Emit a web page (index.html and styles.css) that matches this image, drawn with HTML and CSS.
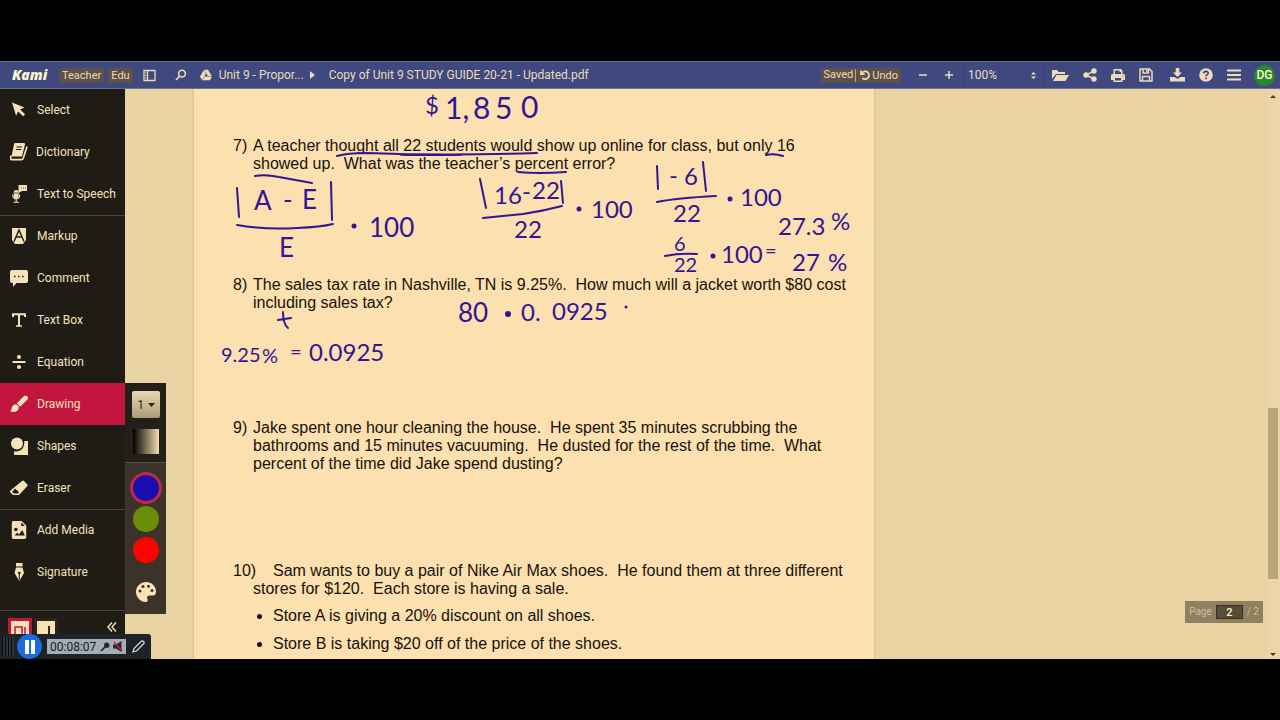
FILE: index.html
```html
<!DOCTYPE html>
<html lang="en">
<head>
<meta charset="utf-8">
<meta name="viewport" content="width=device-width, initial-scale=1">
<title>Kami - Copy of Unit 9 STUDY GUIDE 20-21 - Updated.pdf</title>
<link rel="stylesheet" href="styles.css">
</head>
<body>
<div class="app">
  <header class="topbar">
    <a class="logo" href="#">Kami</a>
    <span class="tag">Teacher</span>
    <span class="tag tag-edu">Edu</span>
    <button class="icon-btn panel-btn" aria-label="Toggle sidebar"><svg width="13" height="13" viewBox="0 0 13 13" fill="none" stroke="currentColor"><path d="M1 1.5h11v10H1zM4.5 1.5v10" stroke-width="1.3"/><path d="M2 4h1.5M2 6.5h1.5M2 9h1.5"/></svg></button>
    <button class="icon-btn search-btn" aria-label="Search"><svg width="12" height="12" viewBox="0 0 12 12" fill="none" stroke="currentColor" stroke-width="1.6"><circle cx="7" cy="4.6" r="3.4"/><path d="M4.6 7.1L1 11"/></svg></button>
    <svg class="drive" width="12" height="12" viewBox="0 0 12 12" fill="currentColor"><path d="M4 .8h4L12 7.4 10 11.2H2L0 7.4z"/><path d="M6 4.500l-1.700 3h3.400z" fill="#3f487f"/><path d="M4 1l4 6.500h4M4.300 7.500L2 11" fill="none" stroke="#3f487f" stroke-width=".5"/></svg>
    <a class="crumb" href="#">Unit 9 - Propor...</a>
    <svg class="crumb-arrow" width="5" height="8" viewBox="0 0 5 8" fill="currentColor"><path d="M0 0l5 4-5 4z"/></svg>
    <span class="title">Copy of Unit 9 STUDY GUIDE 20-21 - Updated.pdf</span>
    <div class="status"><span>Saved</span><button class="undo"><svg width="10" height="10" viewBox="0 0 10 10" fill="none" stroke="currentColor" stroke-width="1.700"><path d="M1 .5v3.700h3.700M1.500 3.700C3 1 6 .8 7.700 2.300c1.800 1.700 1.700 4.500-.2 5.900C5.800 9.400 3.600 9.200 2.200 8"/></svg>Undo</button></div>
    <button class="icon-btn zoom-btn" aria-label="Zoom out"><svg width="10" height="10" viewBox="0 0 10 10" stroke="currentColor" stroke-width="1.500"><path d="M1 5h8"/></svg></button>
    <button class="icon-btn zoom-btn" aria-label="Zoom in"><svg width="10" height="10" viewBox="0 0 10 10" stroke="currentColor" stroke-width="1.500"><path d="M1 5h8M5 1v8"/></svg></button>
    <div class="zoom-field">
      <select class="zoom-select" aria-label="Zoom level"><option>100%</option></select>
      <svg class="zoom-arrows" width="5" height="7" viewBox="0 0 5 7" fill="currentColor"><path d="M0 2.500L2.500 0 5 2.500zM0 4.500h5L2.500 7z"/></svg>
    </div>
    <nav class="actions">
      <button class="icon-btn" aria-label="Open"><svg width="17" height="13" viewBox="0 0 17 13" fill="currentColor"><path d="M0 10V1h5l1.500 2H13v2H4z"/><path d="M4.500 6H17l-3.500 6H1z"/></svg></button>
      <button class="icon-btn" aria-label="Share"><svg width="14" height="14" viewBox="0 0 14 14" fill="currentColor"><circle cx="11" cy="3" r="2.700"/><circle cx="3" cy="7" r="2.700"/><circle cx="11" cy="11" r="2.700"/><path d="M11 3L3 7l8 4" fill="none" stroke="currentColor" stroke-width="1.500"/></svg></button>
      <button class="icon-btn" aria-label="Print"><svg width="14" height="13" viewBox="0 0 14 13" fill="currentColor" fill-rule="evenodd"><path d="M2.500 0h7.500l1.500 1.500V5H13l1 1v5h-2.500v2h-9v-2H0V6l1-1h1.500zM4 1.500V5h6V3H8.500V1.500zM4 9v2.500h6V9zM11.500 6.500v1h1v-1z"/></svg></button>
      <button class="icon-btn" aria-label="Save"><svg width="14" height="14" viewBox="0 0 14 14" fill="none" stroke="currentColor" stroke-width="1.500"><path d="M1 1h9.500L13 3.500V13H1z"/><path d="M3.500 13V8.500h7V13M4 1v4h5.500V1"/><path d="M7.800 1.500v2.500"/></svg></button>
      <button class="icon-btn download-btn" aria-label="Download"><svg width="15" height="14" viewBox="0 0 15 14" fill="currentColor"><path d="M5.700 0h3.600v4.500H12L7.500 9 3 4.500h2.700z"/><path d="M0 9h4.500l3 2 3-2H15v4.500H0z"/></svg></button>
      <button class="icon-btn" aria-label="Help"><svg width="14" height="14" viewBox="0 0 14 14"><circle cx="7" cy="7" r="6.800" fill="currentColor"/><path d="M4.700 5.400C4.900 2.700 9.300 2.800 9.200 5.200 9.100 6.700 7.200 6.700 7.100 8.300M7.100 9.500v1.700" fill="none" stroke="#3f487f" stroke-width="1.700"/></svg></button>
      <button class="icon-btn" aria-label="Menu"><svg width="14" height="12" viewBox="0 0 14 12" stroke="currentColor" stroke-width="2"><path d="M0 1.500h14M0 6h14M0 10.500h14"/></svg></button>
    </nav>
    <button class="avatar">DG</button>
  </header>

  <div class="workspace">
    <aside class="sidebar">
      <div class="group">
        <button class="tool"><svg class="tool-icon" viewBox="0 0 18 18" fill="currentColor"><path d="M2 1.500l12.500 5-4.400 2 5 4.800-1.900 2-5.100-4.900-2 4.400z"/></svg>Select</button>
        <button class="tool tool-dictionary"><svg class="tool-icon" viewBox="0 0 18 18"><path d="M5 0h9q1.500 0 1 1.500L12 13.500H1.500L4 1.500Q4.200 0 5 0z" fill="currentColor"/><path d="M1.300 12.500Q-.5 16.500 2 16.700h9.500q1.300 0 1.700-1.200L17 3.500" fill="none" stroke="currentColor" stroke-width="1.700"/><path d="M6.500 4H12M6 6.500h5.200" stroke="#1f1b15"/></svg>Dictionary</button>
        <button class="tool"><svg class="tool-icon" viewBox="0 0 18 18" fill="currentColor"><path d="M8.500 0H17v6h-5l-3.500 2z"/><rect x="3.800" y="5" width="4.800" height="8.500" rx="2.300"/><path d="M2.700 9.500c0 6 7 6 7 0M6.200 14v3.500M3.500 17.300H9" fill="none" stroke="currentColor" stroke-width="1.100"/><path d="M11 3h1m1 0h1m1 0h1M4 8h4" stroke="#1f1b15" stroke-width=".7"/></svg>Text to Speech</button>
      </div>
      <div class="group">
        <button class="tool"><svg class="tool-icon" viewBox="0 0 18 18"><path d="M2 1h14v12l-3 4H5l-3-4z" fill="currentColor"/><path d="M4 14.500L9 3l5 11.500M6.500 10h5" fill="none" stroke="#1f1b15" stroke-width="1.400"/></svg>Markup</button>
        <button class="tool"><svg class="tool-icon" viewBox="0 0 18 18"><path d="M2 1h14q2 0 2 2v9q0 2-2 2H6.500L3 18v-4H2q-2 0-2-2V3q0-2 2-2z" fill="currentColor"/><path d="M4 7.500h1.500m2.500 0h1.500m2.500 0h1.500" stroke="#1f1b15" stroke-width="1.500"/></svg>Comment</button>
        <button class="tool"><svg class="tool-icon" viewBox="0 0 18 18" fill="none" stroke="currentColor"><path d="M3 6V3.200h12V6M9 3v12" stroke-width="2"/><path d="M6 15h6" stroke-width="1.500"/></svg>Text Box</button>
        <button class="tool"><svg class="tool-icon" viewBox="0 0 18 18" fill="currentColor"><circle cx="9" cy="4" r="2"/><circle cx="9" cy="14" r="2"/><path d="M2.500 8h13v2h-13z"/></svg>Equation</button>
        <div class="tool-slot">
          <button class="tool tool-active"><svg class="tool-icon" viewBox="0 0 18 18"><path d="M15.500 3L9.300 9.200" stroke="currentColor" stroke-width="4.800" stroke-linecap="round"/><path d="M6 9.500c2 .5 3 2 2.700 3.700C8 17 3 18 0 16c2-1 1.300-3 2.500-5 .8-1.400 2-1.800 3.500-1.500z" fill="currentColor"/><path d="M6 8l4 4" stroke="#c2163f" stroke-width="1"/></svg>Drawing</button>
          <div class="flyout">
            <div class="flyout-top">
              <button class="size-btn">1<svg width="7" height="4" viewBox="0 0 7 4" fill="currentColor"><path d="M0 0h7L3.500 4z"/></svg></button>
              <button class="opacity-btn" aria-label="Opacity"></button>
            </div>
            <div class="flyout-colors">
              <button class="swatch swatch-blue" aria-label="Blue"></button>
              <button class="swatch swatch-green" aria-label="Green"></button>
              <button class="swatch swatch-red" aria-label="Red"></button>
              <button class="palette-btn" aria-label="More colors"><svg width="20" height="20" viewBox="0 0 20 20"><path d="M10 0C4.500 0 0 4.400 0 10c0 5.300 4.500 10 9.500 10 2.200 0 2.700-1.800 1.800-3.200-.8-1.600.3-3.300 2.200-3.300H17c2 0 3-1.500 3-4C20 4.200 15.500 0 10 0z" fill="#f9e2b4"/><g fill="#3b332a"><circle cx="4" cy="9" r="1.500"/><circle cx="7" cy="4.500" r="1.500"/><circle cx="12.500" cy="4.300" r="1.500"/><circle cx="16" cy="8.500" r="1.500"/></g></svg></button>
            </div>
          </div>
        </div>
        <button class="tool"><svg class="tool-icon" viewBox="0 0 18 18" fill="currentColor"><circle cx="7" cy="6.500" r="6"/><path d="M14.200 4H18v14H4v-3.800c5 1.400 11-2 10.200-10.200z"/></svg>Shapes</button>
        <button class="tool"><svg class="tool-icon" viewBox="0 0 18 18"><path d="M12 2q1-1 2 0l3.200 3.200q1 1 0 2L9 16H3L.5 13.500q-1-1 0-2z" fill="currentColor"/><path d="M5.200 9.500L9 13.300l-1 1.200H3.800L2.200 12.800z" fill="#1f1b15"/></svg>Eraser</button>
      </div>
      <div class="group">
        <button class="tool"><svg class="tool-icon" viewBox="0 0 18 20"><path d="M3 0h9l5 5v13q0 2-2 2H3q-2 0-2-2V2q0-2 2-2z" fill="currentColor"/><g fill="#1f1b15"><circle cx="5.500" cy="9.500" r="2"/><path d="M4 16l3-3 2 2 3.500-5 3 6zM11.500 1.500v4h4z"/></g></svg>Add Media</button>
        <button class="tool"><svg class="tool-icon" viewBox="0 0 18 18"><path d="M6 0h6.500v3.500H6zM6 4.500h6.500L14 10l-4.700 8L4.500 10z" fill="currentColor"/><path d="M9.300 10v7" stroke="#1f1b15"/><circle cx="9.300" cy="10" r="1.300" fill="#1f1b15"/></svg>Signature</button>
      </div>
      <div class="group group-views">
        <button class="view view-active" aria-label="Thumbnail view"><svg width="18" height="16" viewBox="0 0 18 16"><path d="M4 16V6h7v10M14 6v10" fill="none" stroke="#c2163f" stroke-width="1.500"/></svg></button>
        <button class="view" aria-label="Page view"><svg width="18" height="16" viewBox="0 0 18 16"><path d="M12 5v11" stroke="#2b251d" stroke-width="2"/></svg></button>
        <button class="collapse" aria-label="Collapse sidebar"><svg width="10" height="10" viewBox="0 0 10 10" fill="none" stroke="currentColor" stroke-width="1.400"><path d="M5 .5L1 5l4 4.500M9 .5L5 5l4 4.500"/></svg></button>
      </div>
    </aside>

    <main class="canvas">
      <article class="page">
        <ol class="questions">
          <li class="question q7"><span class="num">7)</span><p>A teacher thought all 22 students would show up online for class, but only 16<br>showed up.&nbsp; What was the teacher’s percent error?</p></li>
          <li class="question q8"><span class="num">8)</span><p>The sales tax rate in Nashville, TN is 9.25%.&nbsp; How much will a jacket worth $80 cost<br>including sales tax?</p></li>
          <li class="question q9"><span class="num">9)</span><p>Jake spent one hour cleaning the house.&nbsp; He spent 35 minutes scrubbing the<br>bathrooms and 15 minutes vacuuming.&nbsp; He dusted for the rest of the time.&nbsp; What<br>percent of the time did Jake spend dusting?</p></li>
          <li class="question q10"><span class="num">10)</span><div><p class="indented">Sam wants to buy a pair of Nike Air Max shoes.&nbsp; He found them at three different<br>stores for $120.&nbsp; Each store is having a sale.</p>
            <ul class="stores"><li>Store A is giving a 20% discount on all shoes.</li><li>Store B is taking $20 off of the price of the shoes.</li></ul></div></li>
        </ol>
        <svg class="ink" width="680" height="570" viewBox="194 89 680 570">
          <g class="strokes">
            <path d="M337 156q10-3 30-3 80 3 170 0M401 155h60M766 155q8-2 17 1M518 172q20 2 48 0M255 176q10-2 24 1l33 6"/>
            <path d="M237 188l2 29M331 182l1 38M237 225q28 5 60 3 24-1 36-4"/>
            <path d="M480 179l6 29M561 181l2 22M483 218l40-4q20-3 39-8"/>
            <path d="M657 166l1 23M703 162l3 29M657 202q20-4 59-6M665 256q14-3 32-2"/>
            <path d="M278 320l13-2M283 312q0 12 5 16"/>
          </g>
          <g class="dots"><circle cx="354" cy="226" r="2.500"/><circle cx="579" cy="209" r="2.500"/><circle cx="730" cy="199" r="2.500"/><circle cx="713" cy="256" r="2.500"/><circle cx="508" cy="314" r="3"/><circle cx="626" cy="307" r="1.500"/></g>
          <g class="hand">
            <text class="mid" x="425" y="114">$</text><text class="xl" x="445" y="119">1,</text><text class="xl" x="473" y="119">8</text><text class="xl" x="495" y="119">5</text><text class="xl" x="521" y="118">0</text>
            <text class="big" x="254" y="210">A</text><text class="big" x="283" y="209">-</text><text class="big" x="302" y="209">E</text><text class="big" x="279" y="257">E</text>
            <text class="big" x="369" y="237">100</text>
            <text class="mid" x="494" y="204">16</text><text class="mid" x="522" y="200">-</text><text class="mid" x="532" y="199">22</text><text class="mid" x="514" y="238">22</text><text class="mid" x="591" y="218">100</text>
            <text class="mid" x="669" y="184">-</text><text class="mid" x="684" y="185">6</text><text class="mid" x="673" y="222">22</text><text class="mid" x="740" y="206">100</text>
            <text class="mid" x="778" y="235">27.3</text><text class="mid" x="831" y="230">%</text>
            <text class="small" x="674" y="251">6</text><text class="small" x="674" y="272">22</text><text class="mid" x="721" y="263">100</text><text class="small" x="765" y="258">=</text><text class="mid" x="792" y="271">27</text><text class="mid" x="828" y="271">%</text>
            <text class="small" x="221" y="362">9.25</text><text class="small" x="262" y="363">%</text><text class="small" x="290" y="359">=</text><text class="mid" x="309" y="361">0.0925</text>
            <text class="big" x="458" y="322">80</text><text class="mid" x="521" y="321">0.</text><text class="mid" x="552" y="320">0925</text>
          </g>
        </svg>
      </article>
      <label class="pager">Page <input class="pager-input" type="text" value="2"> / 2</label>
    </main>
    <div class="scrollbar"><div class="thumb"></div></div>
  </div>

  <div class="recorder">
    <span class="grip"></span>
    <button class="pause" aria-label="Pause"><svg width="12" height="14" viewBox="0 0 12 14" fill="#fff"><path d="M1 0h4v14H1zM7 0h4v14H7z"/></svg></button>
    <div class="time">00:08:07
      <svg width="10" height="10" viewBox="0 0 10 10"><path d="M1 9l4-4" stroke="#22282e" stroke-width="1.700"/><circle cx="6.700" cy="3.300" r="2.700" fill="#22282e"/></svg>
      <svg width="10" height="11" viewBox="0 0 10 11"><path d="M0 3.500h3L8.500 0v11L3 7.500H0z" fill="#3a2428"/><path d="M1 1l8 9" stroke="#d01830" stroke-width="1.200"/></svg>
    </div>
    <button class="icon-btn" aria-label="Draw"><svg width="13" height="13" viewBox="0 0 13 13" fill="none" stroke="#d8dde0" stroke-width="1.200"><path d="M1 12l1-3.500L9.500 1q1-.5 2 .5t.5 2L4.500 11z"/></svg></button>
  </div>
</div>
</body>
</html>
```
FILE: styles.css
```css
* { box-sizing: border-box; }
body { margin: 0; background: #000; font: 12px/16px Roboto, sans-serif; color: #f5e2bb; }
button { font: inherit; color: inherit; background: none; border: 0; padding: 0; }
a { color: inherit; text-decoration: none; }
svg { display: block; flex: none; }
.app { height: 100vh; padding: 61px 0; position: relative; display: flex; flex-direction: column; }

.topbar { height: 28px; flex: none; display: flex; align-items: center; background: #3f487f; border: 1px solid #6b6f91; border-width: 1px 0; color: #ecdcb9; white-space: nowrap; }
.logo { font: italic 900 14px/16px "Noto Sans", sans-serif; margin-left: 12px; width: 47px; color: #fff3cf; }
.tag { background: #5d5147; border-radius: 2px; padding: 0 3px; font-size: 11px; line-height: 15px; }
.tag-edu { margin-left: 4px; }
.icon-btn { display: flex; align-items: center; justify-content: center; }
.panel-btn { margin-left: 10px; }
.search-btn { margin-left: 19px; }
.drive { margin-left: 13px; }
.crumb { margin-left: 7px; }
.crumb-arrow { margin-left: 6px; }
.title { margin-left: 14px; }
.status { margin-left: auto; display: flex; align-items: center; background: #5d5147; border-radius: 2px; padding: 0 3px; height: 15px; font-size: 11px; }
.undo { display: flex; align-items: center; gap: 2px; margin-left: 2px; padding-left: 4px; border-left: 1px solid #b9aa8b; line-height: 13px; }
.zoom-btn { width: 26px; }
.status + .zoom-btn { margin-left: 9px; }
.zoom-field { width: 80px; margin-left: 2px; height: 22px; display: flex; align-items: center; border: 1px solid #384071; border-width: 0 1px; padding: 0 7px 0 3px; }
.zoom-select { appearance: none; flex: 1; min-width: 0; border: 0; padding: 0; background: none; color: inherit; font: inherit; }
.actions { display: flex; align-items: center; gap: 14px; margin-left: 8px; }
.download-btn { margin-left: 3px; }
.avatar { width: 21px; height: 21px; border-radius: 50%; background: #268a2c; margin: 0 5px 0 13px; font-weight: 500; line-height: 21px; color: #fff5d5; }

.workspace { flex: 1; min-height: 0; display: flex; }
.sidebar { width: 125px; flex: none; background: #1f1b15; display: flex; flex-direction: column; position: relative; z-index: 2; }
.group + .group { box-shadow: inset 0 1px #4b4438; }
.tool { display: flex; align-items: center; gap: 9px; width: 100%; height: 42px; padding-left: 10px; text-align: left; }
.tool-dictionary { gap: 8px; }
.tool-icon { width: 18px; height: 18px; }
.tool-slot { position: relative; }
.tool-active { background: #c2163f; }
.group-views { margin-top: auto; height: 49px; display: flex; align-items: flex-start; gap: 2px; padding: 8px 8px 0; }
.view { width: 24px; height: 22px; border: 3px solid #2b251d; background: #f9e2b4; }
.view-active { border-color: #c2163f; }
.collapse { margin: 4px 0 0 auto; }

.flyout { position: absolute; left: 100%; top: 0; width: 41px; background: #3b332a; }
.flyout-top { background: #241f18; padding: 8px 6px 8px 7px; display: flex; flex-direction: column; align-items: center; gap: 11px; border-bottom: 1px solid #5c5344; }
.size-btn { width: 28px; height: 27px; border-radius: 2px; background: linear-gradient(#eadab2, #ab9b78); color: #2b241a; display: flex; align-items: center; justify-content: center; gap: 4px; }
.opacity-btn { width: 26px; height: 25px; background: linear-gradient(90deg, #000, #f3deb0); }
.flyout-colors { display: flex; flex-direction: column; align-items: center; gap: 5px; padding: 12px 0 12px; }
.swatch { width: 26px; height: 26px; border-radius: 50%; }
.swatch-blue { background: #1c0db0; outline: 3px solid #c02848; }
.swatch-green { background: #6b8c07; }
.swatch-red { background: #fe0300; }
.palette-btn { margin-top: 14px; }

.canvas { flex: 1; min-width: 0; position: relative; overflow: hidden; background: #e9d3a2; }
.page { position: relative; width: 680px; height: 100%; margin-left: 69px; padding: 48px 20px 0 39px; background: #fce0af; box-shadow: 0 0 2px #b9a475; font: 16px/18px "Liberation Sans", Arial, sans-serif; color: #17120d; white-space: nowrap; }
.questions { margin: 0; padding: 0; list-style: none; }
.question { display: grid; grid-template-columns: 20px 1fr; }
.question p { margin: 0; }
.q7 { margin-bottom: 103px; }
.q8 { margin-bottom: 107px; }
.q9 { margin-bottom: 89px; }
.indented { text-indent: 20px; }
.stores { margin: 9px 0 0; padding-left: 20px; list-style: disc; }
.stores li { margin-bottom: 10px; }
.ink { position: absolute; left: 0; top: 0; }
.strokes { fill: none; stroke: #321694; stroke-width: 2; stroke-linecap: round; }
.dots { fill: #321694; }
.hand { fill: #321694; font-family: Lato, sans-serif; font-weight: 400; }
.xl { font-size: 30px; }
.big { font-size: 26px; }
.mid { font-size: 24px; }
.small { font-size: 20px; }

.pager { position: absolute; right: 4px; bottom: 36px; height: 22px; padding: 0 4px; display: flex; align-items: center; gap: 4px; background: #8e8060; color: #cfbf98; font-size: 10px; }
.pager-input { width: 27px; height: 14px; border: 1px solid #393124; background: #574d3b; color: #fff0c8; text-align: center; font: 500 11px/12px Roboto, sans-serif; padding: 0; }
.scrollbar { width: 13px; flex: none; display: flex; flex-direction: column; position: relative; background: #ecd6a7; padding: 0 2px 0 1px; }
.scrollbar::before, .scrollbar::after { content: ""; border: 3px solid transparent; align-self: center; }
.scrollbar::before { border-bottom-color: #4c3d22; margin-top: 3px; }
.scrollbar::after { border-top-color: #4c3d22; margin: auto 0 0; }
.thumb { height: 30%; margin-top: 310px; background: #baa67d; }

.recorder { position: absolute; left: 0; bottom: 61px; z-index: 3; height: 25px; width: 151px; display: flex; align-items: center; background: #1c2329; border-radius: 0 3px 0 0; }
.grip { width: 12px; height: 20px; margin: 0 3px 0 2px; background: repeating-linear-gradient(90deg, #07090b 0 1px, #2c3439 1px 3px); }
.pause { width: 25px; height: 25px; border-radius: 50%; background: #1c6cdd; display: flex; align-items: center; justify-content: center; flex: none; }
.time { margin: 0 6px 0 5px; height: 15px; width: 79px; flex: none; padding: 0 3px; display: flex; align-items: center; justify-content: space-between; background: #a4adb7; color: #12181e; }
```
